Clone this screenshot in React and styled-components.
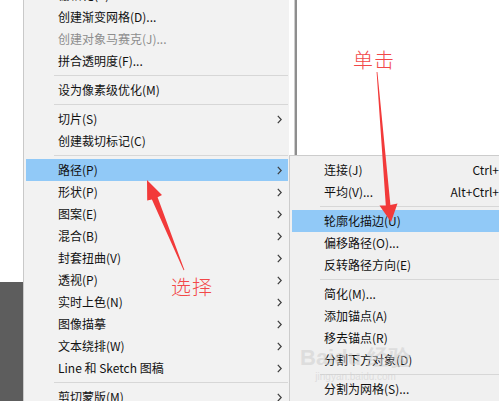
import styled, { createGlobalStyle } from 'styled-components'

const GlobalStyle = createGlobalStyle`
  html, body {
    margin: 0;
    padding: 0;
    background: #fff;
    overflow: hidden;
  }
`

const mainItems = [
  { label: '栅格化(Z)...' },
  { label: '创建渐变网格(D)...' },
  { label: '创建对象马赛克(J)...', disabled: true },
  { label: '拼合透明度(F)...' },
  { sep: true },
  { label: '设为像素级优化(M)' },
  { sep: true },
  { label: '切片(S)', sub: true },
  { label: '创建裁切标记(C)' },
  { sep: true },
  { label: '路径(P)', sub: true, active: true },
  { label: '形状(P)', sub: true },
  { label: '图案(E)', sub: true },
  { label: '混合(B)', sub: true },
  { label: '封套扭曲(V)', sub: true },
  { label: '透视(P)', sub: true },
  { label: '实时上色(N)', sub: true },
  { label: '图像描摹', sub: true },
  { label: '文本绕排(W)', sub: true },
  { label: 'Line 和 Sketch 图稿', sub: true },
  { sep: true },
  { label: '剪切蒙版(M)', sub: true },
]

const pathItems = [
  { label: '连接(J)', shortcut: 'Ctrl+' },
  { label: '平均(V)...', shortcut: 'Alt+Ctrl+' },
  { sep: true },
  { label: '轮廓化描边(U)', active: true },
  { label: '偏移路径(O)...' },
  { label: '反转路径方向(E)' },
  { sep: true },
  { label: '简化(M)...' },
  { label: '添加锚点(A)' },
  { label: '移去锚点(R)' },
  { label: '分割下方对象(D)' },
  { sep: true },
  { label: '分割为网格(S)...' },
]

function Chevron() {
  return (
    <ChevronIcon width='5' height='9' viewBox='0 0 5 9'>
      <path d='M0.8 0.8 L4.2 4.5 L0.8 8.2' fill='none' stroke='#3c3c3c' strokeWidth='1.2' />
    </ChevronIcon>
  )
}

function MenuList({ items }) {
  return items.map((it, i) =>
    it.sep ? (
      <Separator key={i} />
    ) : (
      <Item key={i} $active={it.active} $disabled={it.disabled}>
        <span>{it.label}</span>
        {it.shortcut && <Shortcut>{it.shortcut}</Shortcut>}
        {it.sub && <Chevron />}
      </Item>
    )
  )
}

function Annotations() {
  return (
    <Overlay width='499' height='401' viewBox='0 0 499 401'>
      <polygon
        points='376.6,72 377.4,72 390.4,205 397.5,203.5 391,222 379.5,205.5 385.8,205.5'
        fill='#f23a3a'
      />
      <polygon
        points='147,180 162,195 157.6,197.3 184.4,270 183.6,270.3 151.9,199.6 147.2,200.5'
        fill='#f23a3a'
      />
    </Overlay>
  )
}

export default function App() {
  return (
    <>
      <GlobalStyle />
      <Page>
        <LeftStrip>
          <Canvas />
          <Pasteboard />
        </LeftStrip>
        <MainMenu>
          <MenuList items={mainItems} />
        </MainMenu>
        <RightCol>
          <TopArea>
            <ShadowLine />
          </TopArea>
          <SubMenu>
            <MenuList items={pathItems} />
          </SubMenu>
        </RightCol>
        <Annotations />
        <Note $x={353} $y={45}>单击</Note>
        <Note $x={171} $y={272}>选择</Note>
        <Watermark>
          <span>Bai<b>du</b> 经验</span>
          <small>jingyan.baidu.com</small>
        </Watermark>
      </Page>
    </>
  )
}

const Page = styled.div`
  position: relative;
  width: 499px;
  height: 401px;
  overflow: hidden;
  display: flex;
  font-family: 'Noto Sans CJK SC', 'Noto Sans', sans-serif;
  font-size: 12px;
  color: #111;
`

const LeftStrip = styled.div`
  width: 23px;
  flex-shrink: 0;
  display: flex;
  flex-direction: column;
`

const Canvas = styled.div`
  height: 282px;
  background: #fff;
`

const Pasteboard = styled.div`
  flex: 1;
  background: #5d5d5d;
`

const MainMenu = styled.div`
  width: 262px;
  flex-shrink: 0;
  margin-top: -16px;
  padding: 0 1px 0 2px;
  background: #f2f2f2;
  border-left: 1px solid #c9c9c9;
`

const RightCol = styled.div`
  flex: 1;
  display: flex;
  flex-direction: column;
  min-width: 0;
`

const TopArea = styled.div`
  height: 155px;
  background: #fff;
  display: flex;
  padding-left: 5px;
`

const ShadowLine = styled.div`
  width: 2px;
  background: #8e8e8e;
  border-left: 1px solid #cdcdcd;
`

const SubMenu = styled.div`
  flex: 1;
  background: #f0f0f0;
  border-top: 1px solid #cccccc;
  border-left: 1px solid #cccccc;
  padding: 3px 0 0 2px;
`

const Item = styled.div`
  height: 22px;
  display: flex;
  align-items: center;
  padding: 0 6px 0 32px;
  line-height: 22px;
  white-space: nowrap;
  background: ${(p) => (p.$active ? '#91c9f7' : 'transparent')};
  color: ${(p) => (p.$disabled ? '#8d8d8d' : '#111')};

  span:first-child {
    flex: 1;
  }
`

const Shortcut = styled.span`
  margin-right: -6px;
  color: #111;
`

const ChevronIcon = styled.svg`
  display: block;
  flex-shrink: 0;
`

const Separator = styled.div`
  height: 7px;
  margin-left: 28px;
  display: flex;
  align-items: center;

  &::after {
    content: '';
    flex: 1;
    height: 1px;
    background: #d7d7d7;
  }
`

const Overlay = styled.svg`
  position: absolute;
  left: 0;
  top: 0;
  pointer-events: none;
`

const Note = styled.div`
  position: absolute;
  left: ${(p) => p.$x}px;
  top: ${(p) => p.$y}px;
  font-size: 20px;
  line-height: 30px;
  font-weight: 300;
  color: #f24848;
  letter-spacing: 1px;
`

const Watermark = styled.div`
  position: absolute;
  left: 300px;
  top: 345px;
  display: flex;
  flex-direction: column;
  align-items: center;
  color: rgba(205, 205, 205, 0.55);
  pointer-events: none;

  span {
    font-family: 'Liberation Sans', sans-serif;
    font-size: 22px;
    font-weight: bold;
    line-height: 26px;
  }

  b {
    font-weight: bold;
  }

  small {
    font-family: 'Liberation Sans', sans-serif;
    font-size: 10px;
    line-height: 12px;
  }
`
